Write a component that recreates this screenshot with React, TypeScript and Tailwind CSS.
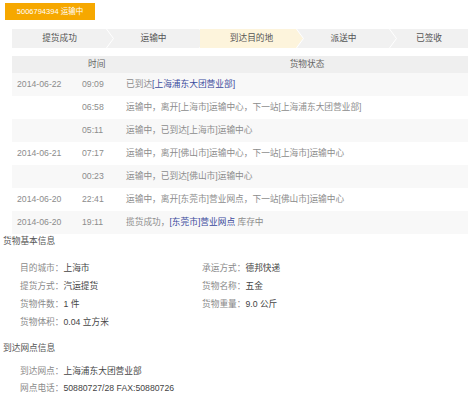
import React from 'react'

const STEPS = [
  { label: '提货成功', w: 'w-[95px]' },
  { label: '运输中', w: 'w-[93px]' },
  { label: '到达目的地', w: 'w-[97px]', active: true },
  { label: '派送中', w: 'w-[93px]' },
  { label: '已签收', w: 'flex-1', last: true },
]

const ROWS = [
  { date: '2014-06-22', time: '09:09', text: <>已到达<span className="text-[#3b4a9c]">[上海浦东大团营业部]</span></> },
  { date: '', time: '06:58', text: '运输中，离开[上海市]运输中心，下一站[上海浦东大团营业部]' },
  { date: '', time: '05:11', text: '运输中，已到达[上海市]运输中心' },
  { date: '2014-06-21', time: '07:17', text: '运输中，离开[佛山市]运输中心，下一站[上海市]运输中心' },
  { date: '', time: '00:23', text: '运输中，已到达[佛山市]运输中心' },
  { date: '2014-06-20', time: '22:41', text: '运输中，离开[东莞市]营业网点，下一站[佛山市]运输中心' },
  { date: '2014-06-20', time: '19:11', text: <>揽货成功，<span className="text-[#3b4a9c]">[东莞市]营业网点</span> 库存中</> },
]

function Item({ label, value, h = 'h-[18px]' }: { label: string; value: string; h?: string }) {
  return (
    <div className={`${h} flex items-center`}>
      <span className="text-[#8a8a8a]">{label}：</span>
      <span className="text-[#444]">{value}</span>
    </div>
  )
}

export default function App() {
  return (
    <div className="w-[468px] h-[400px] bg-white overflow-hidden text-[8.7px] leading-none" style={{ fontFamily: '"Liberation Sans", "Noto Sans CJK SC", sans-serif' }}>
      <div className="pt-[3px] pl-[5px]">
        <div className="w-[90px] h-[17px] bg-[#f6a800] text-white flex items-center justify-center text-[7.5px]">
          5006794394 运输中
        </div>
      </div>

      <div className="mt-[9px] ml-[12px] h-[19px] flex bg-[#f1f1f1] text-[#555]">
        {STEPS.map((s) => (
          <div key={s.label} className={`relative ${s.w} h-full flex items-center justify-center ${s.active ? 'bg-[#fdf4dc] z-10' : 'z-0'}`}>
            <span className={s.active ? 'pl-[6px]' : ''}>{s.label}</span>
            {!s.last && (
              <svg className="absolute top-0 right-[-7px] w-[8px] h-[19px]" viewBox="0 0 8 19">
                <polygon points="0,0 7,9.5 0,19" fill={s.active ? '#fdf4dc' : '#f1f1f1'} />
                <polyline points="0.5,0 7.5,9.5 0.5,19" fill="none" stroke="#ffffff" strokeWidth="1" />
              </svg>
            )}
          </div>
        ))}
      </div>

      <div className="mt-[8px] ml-[12px]">
        <div className="h-[17px] bg-[#efefef] flex items-center text-[#666]">
          <div className="w-[70px]" />
          <div className="w-[44px] pl-[6px]">时间</div>
          <div className="flex-1 text-center pl-[20px]">货物状态</div>
        </div>
        {ROWS.map((r, i) => (
          <div key={i} className={`h-[23px] flex items-center text-[#8c8c8c] ${i % 2 === 0 ? 'bg-[#f8f8f8]' : 'bg-white'}`}>
            <div className="w-[70px] pl-[5px]">{r.date}</div>
            <div className="w-[44px]">{r.time}</div>
            <div className="flex-1 whitespace-nowrap">{r.text}</div>
          </div>
        ))}
      </div>

      <div className="pl-[3px] h-[14px] flex items-center text-[#555]">货物基本信息</div>
      <div className="pl-[20px] pt-[11px] grid grid-cols-[182px_1fr]">
        <div>
          <Item label="目的城市" value="上海市" />
          <Item label="提货方式" value="汽运提货" />
          <Item label="货物件数" value="1 件" />
          <Item label="货物体积" value="0.04 立方米" />
        </div>
        <div>
          <Item label="承运方式" value="德邦快递" />
          <Item label="货物名称" value="五金" />
          <Item label="货物重量" value="9.0 公斤" />
        </div>
      </div>

      <div className="pl-[3px] mt-[10px] h-[14px] flex items-center text-[#555]">到达网点信息</div>
      <div className="pl-[20px] pt-[8px]">
        <Item label="到达网点" value="上海浦东大团营业部" h="h-[17px]" />
        <Item label="网点电话" value="50880727/28 FAX:50880726" h="h-[17px]" />
      </div>
    </div>
  )
}
